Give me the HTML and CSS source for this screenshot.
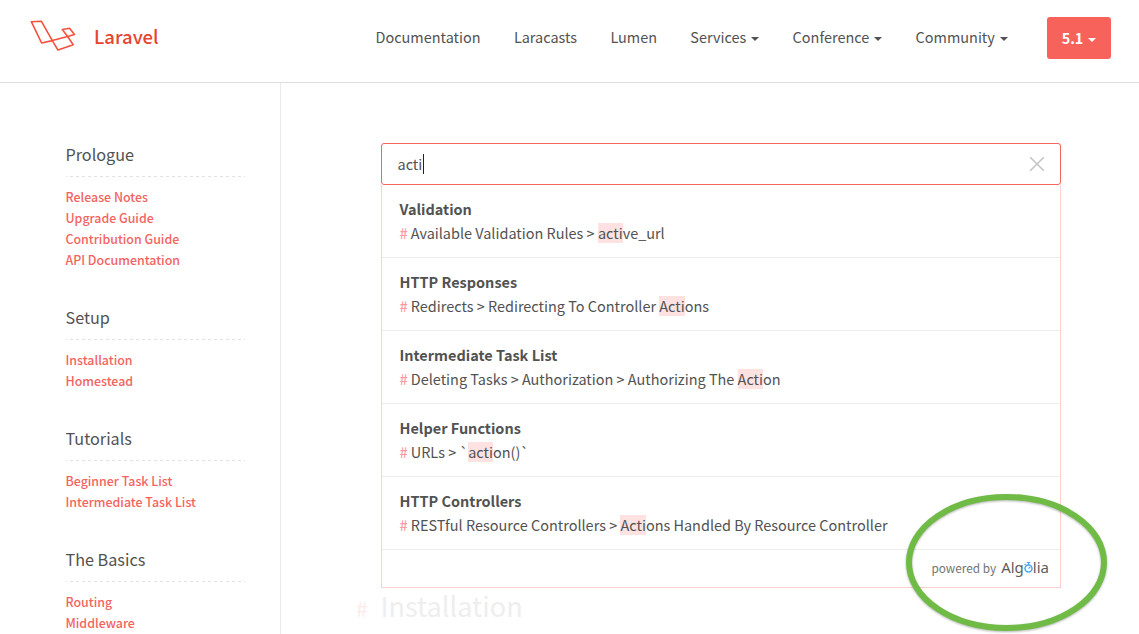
FILE: index.html
```html
<!DOCTYPE html>
<html lang="en">
<head>
<meta charset="utf-8">
<title>Laravel</title>
<link rel="stylesheet" href="styles.css">
</head>
<body>
<header class="topbar">
  <a class="brand">
    <svg class="brand-mark" width="46" height="34" viewBox="0 0 46 34" fill="none" stroke="#f4513b" stroke-width="1.6" stroke-linejoin="round"><path d="M1.300 1.700 11.300 1.200 22.300 20.600 11.600 23ZM22.300 20.600 37.600 16.500 43.200 24.700 28 30.100ZM37.600 16.500 44.500 14.600 39.500 8.300 32.300 9.500Z"/></svg>
    <span class="brand-name">Laravel</span>
  </a>
  <nav class="nav">
    <a>Documentation</a>
    <a>Laracasts</a>
    <a>Lumen</a>
    <a>Services<i class="caret"></i></a>
    <a>Conference<i class="caret"></i></a>
    <a>Community<i class="caret"></i></a>
  </nav>
  <button class="version">5.1<i class="caret"></i></button>
</header>
<div class="page">
  <aside class="sidebar">
    <section><h2>Prologue</h2><ul><li>Release Notes</li><li>Upgrade Guide</li><li>Contribution Guide</li><li>API Documentation</li></ul></section>
    <section><h2>Setup</h2><ul><li>Installation</li><li>Homestead</li></ul></section>
    <section><h2>Tutorials</h2><ul><li>Beginner Task List</li><li>Intermediate Task List</li></ul></section>
    <section><h2>The Basics</h2><ul><li>Routing</li><li>Middleware</li></ul></section>
  </aside>
  <main class="content">
    <div class="search">
      <span class="query">acti</span><span class="cursor"></span>
      <svg class="clear" width="16" height="16" viewBox="0 0 16 16" stroke="#c4c4c4" stroke-width="1.6"><path d="M1.200 1.200 14.800 14.800M14.800 1.200 1.200 14.800"/></svg>
    </div>
    <div class="results">
      <div class="result"><h3>Validation</h3><p><b>#</b>Available Validation Rules &gt; <mark>acti</mark>ve_url</p></div>
      <div class="result"><h3>HTTP Responses</h3><p><b>#</b>Redirects &gt; Redirecting To Controller <mark>Acti</mark>ons</p></div>
      <div class="result"><h3>Intermediate Task List</h3><p><b>#</b>Deleting Tasks &gt; Authorization &gt; Authorizing The <mark>Acti</mark>on</p></div>
      <div class="result"><h3>Helper Functions</h3><p><b>#</b>URLs &gt; `<mark>acti</mark>on()`</p></div>
      <div class="result"><h3>HTTP Controllers</h3><p><b>#</b>RESTful Resource Controllers &gt; <mark>Acti</mark>ons Handled By Resource Controller</p></div>
      <div class="powered">
        <span>powered by</span>
        <span class="algolia">Alg<svg width="9" height="14" viewBox="0 0 9 14" fill="none" stroke="#46a9e6"><circle cx="4.500" cy="8.500" r="3.500" stroke-width="1.500"/><path d="M2.800 2.500h3.400M4.500 2.500v2.500M4.500 8.700l1.800-1.800M.6 5l1.200-1" stroke-width="1.200"/></svg>lia</span>
      </div>
    </div>
    <h1 class="doc-title"><span>#</span>Installation</h1>
  </main>
</div>
<svg class="highlight-ring" width="209" height="145" viewBox="0 0 209 145"><ellipse cx="104.500" cy="72.500" rx="97.500" ry="65.500" fill="none" stroke="#6fbb45" stroke-width="6"/></svg>
</body>
</html>
```
FILE: styles.css
```css
* { box-sizing: border-box; margin: 0; padding: 0; }
body {
  width: 1139px; height: 634px; overflow: hidden; position: relative;
  background: #fff; color: #525252;
  font-family: "Noto Sans CJK JP", "Noto Sans", sans-serif;
  font-size: 14.46px; line-height: 24px; white-space: nowrap;
}
.topbar { display: flex; height: 83px; border-bottom: 1px solid #dedede; padding: 0 28px 0 30px; align-items: flex-start; }
.brand { display: flex; color: #e74430; width: 345.500px; padding-top: 20px; }
.brand-mark { margin-right: 18px; }
.brand-name { font-size: 18.500px; font-weight: 500; line-height: 32px; }
.nav { display: flex; gap: 33.300px; padding-top: 25px; flex: 1; }
.caret { display: inline-block; border: 4px solid transparent; border-top-color: currentColor; border-bottom: 0; margin-left: 5px; vertical-align: 2px; }
.version { width: 64px; height: 42px; margin-top: 17px; border: 0; border-radius: 3px; background: #f7635b; color: #fff; font: bold 14.400px/42px "Noto Sans CJK JP", sans-serif; }
.page { display: flex; height: 551px; }
.sidebar { width: 281px; border-right: 1px solid #eaeaea; padding: 59px 35px 0 65.500px; }
.sidebar section { margin-bottom: 34px; }
.sidebar h2 {
  font-size: 16.200px; font-weight: 400; height: 35px; margin-bottom: 10px;
  background: repeating-linear-gradient(90deg, #e2e2e2 0 3px, transparent 3px 6px) -2px 100% / 200% 1px no-repeat;
}
.sidebar li { list-style: none; font-size: 12.400px; font-weight: 500; line-height: 21px; color: #f4645f; }
.content { padding: 60px 0 0 100px; }
.search { display: flex; align-items: center; width: 680px; height: 42px; border: 1px solid #f4645f; border-radius: 3px; padding: 0 15px 0 15.500px; }
.cursor { width: 1px; height: 20px; background: #222; margin-left: .5px; }
.clear { margin-left: auto; }
.results { width: 680px; height: 403px; border: 1px solid #fcd0ce; border-top: 0; }
.result { height: 73px; padding: 12px 0 0 17.500px; border-bottom: 1px solid #ececec; }
.result h3 { font-size: 14.470px; font-weight: 700; }
.result b { font-weight: 500; color: #fa9ba3; margin-right: 3px; }
.result mark { display: inline-block; height: 20px; line-height: 20px; color: inherit; background: #fee2e2; }
.powered { display: flex; height: 37px; align-items: center; justify-content: flex-end; padding-right: 11px; font-size: 11.800px; color: #737373; }
.powered > span:first-child { line-height: 20px; margin-top: -1px; }
.algolia { margin: -3px 0 0 5px; font-family: "Noto Sans", sans-serif; font-size: 15px; letter-spacing: 0; line-height: 20px; color: #5d5d5d; }
.algolia svg { vertical-align: -1px; }
.doc-title { font-size: 27.100px; font-weight: 400; line-height: 40px; color: #eee; margin: -2px 0 0 -25px; }
.doc-title span { font-size: 21px; color: #fdeaea; display: inline-block; width: 24.500px; }
.highlight-ring { position: absolute; left: 902px; top: 490px; filter: drop-shadow(0 1px 1px rgba(0,0,0,.3)); }
```
